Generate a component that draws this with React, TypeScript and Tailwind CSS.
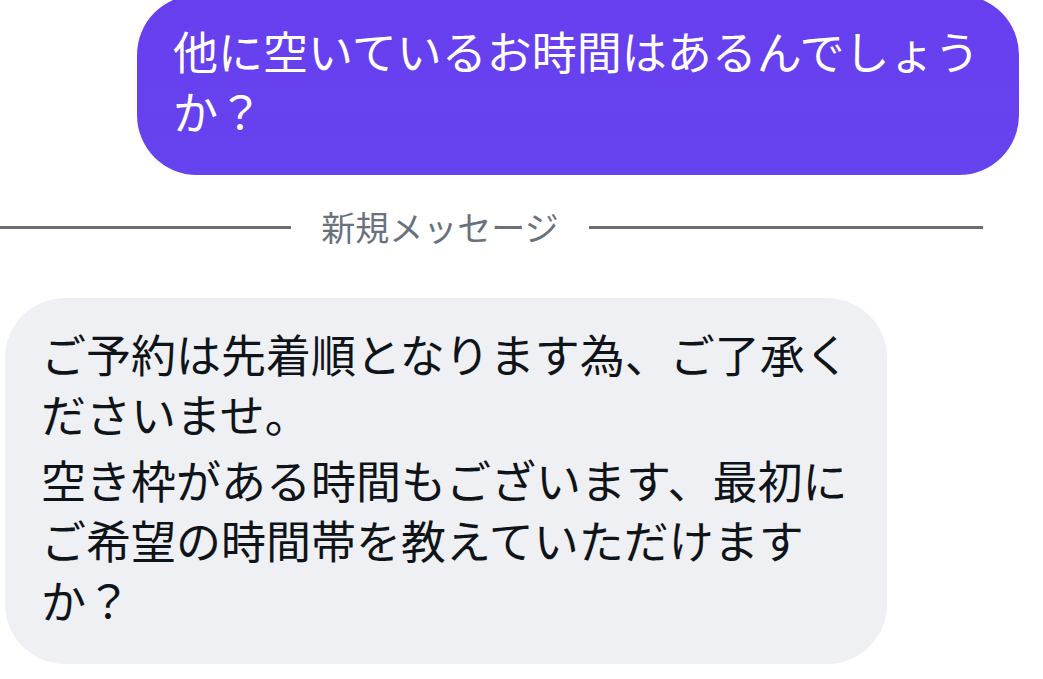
type Message = { id: number; from: "me" | "salon"; lines: string[] };

const SENT: Message = {
  id: 1,
  from: "me",
  lines: ["他に空いているお時間はあるんでしょうか？"],
};

const RECEIVED: Message = {
  id: 2,
  from: "salon",
  lines: [
    "ご予約は先着順となります為、ご了承くださいませ。",
    "空き枠がある時間もございます、最初にご希望の時間帯を教えていただけますか？",
  ],
};

const bubbleCls =
  "w-[882px] max-w-full space-y-1.5 rounded-[60px] px-9 pt-[26px] pb-[34px] text-[45px] leading-[60px] ";

function Bubble({ message }: { message: Message }) {
  const mine = message.from === "me";
  return (
    <div
      className={
        bubbleCls +
        (mine
          ? "self-end bg-linear-to-b from-[#683fef] to-[#6543ee] text-white"
          : "self-start bg-[#eff0f4] text-[#0f1419]")
      }
    >
      {message.lines.map((line) => (
        <p key={line}>{line}</p>
      ))}
    </div>
  );
}

// Left rule runs off the edge of the view, both rules share the same length
function NewMessageDivider() {
  return (
    <div className="mt-[23px] mr-[60px] -ml-[103px] flex items-center gap-[30px]">
      <span className="h-[3px] flex-1 bg-[#6c6b76]" />
      <span className="text-[34px] leading-[58px] text-[#68727c]">新規メッセージ</span>
      <span className="h-[3px] flex-1 bg-[#6c6b76]" />
    </div>
  );
}

export default function App() {
  return (
    <main
      lang="ja"
      className="flex min-h-screen flex-col overflow-hidden bg-white font-['Noto_Sans_CJK_JP',sans-serif]"
    >
      {/* the sent bubble is scrolled slightly past the top edge */}
      <div className="-mt-[5px] mr-6 flex flex-col">
        <Bubble message={SENT} />
      </div>
      <NewMessageDivider />
      <div className="mt-[42px] ml-[5px] flex flex-col">
        <Bubble message={RECEIVED} />
      </div>
    </main>
  );
}
